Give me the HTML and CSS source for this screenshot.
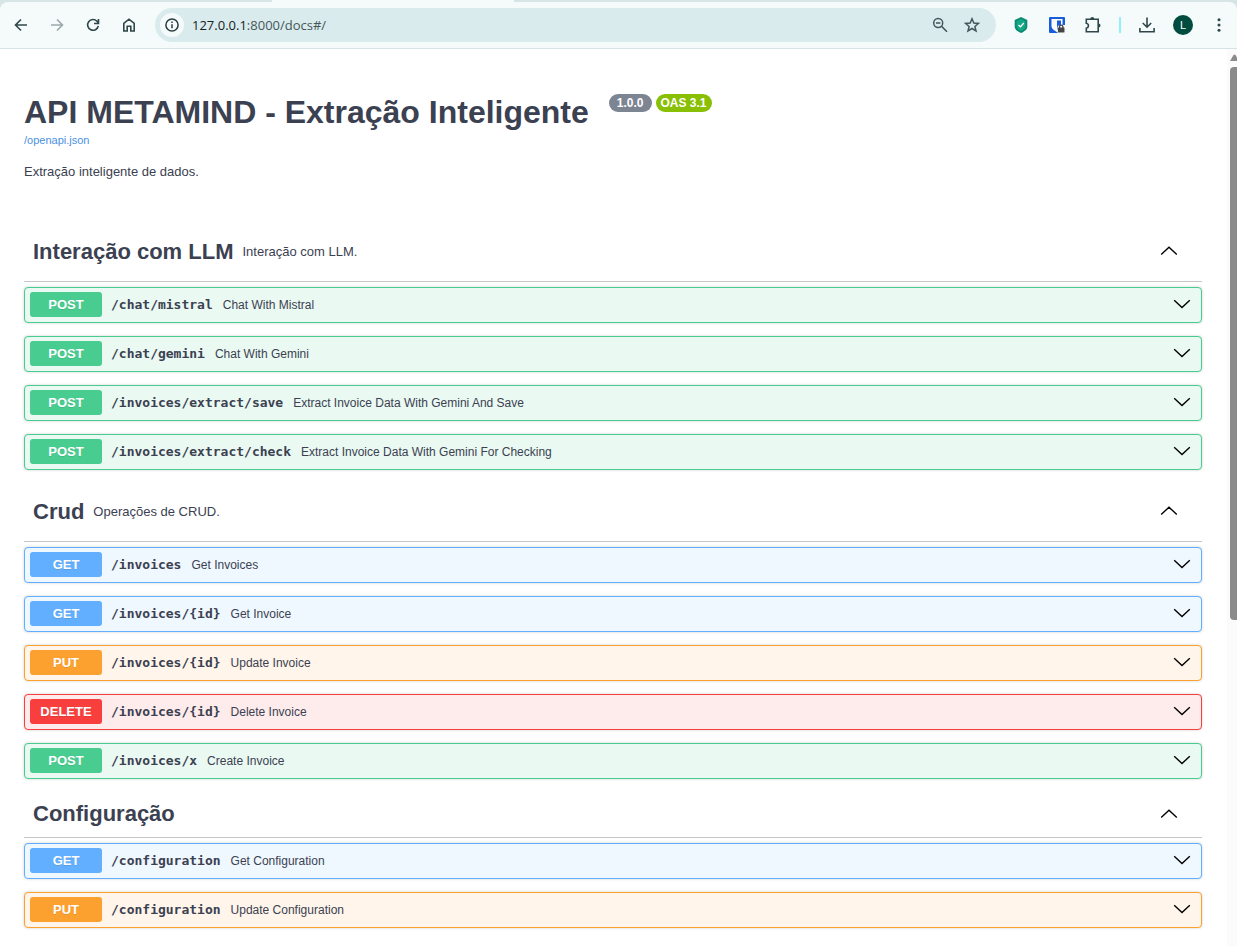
FILE: index.html
```html
<!DOCTYPE html>
<html lang="pt-BR">
<head>
<meta charset="utf-8">
<title>API METAMIND - Extração Inteligente</title>
<link rel="stylesheet" href="styles.css">
</head>
<body>
<svg class="defs" aria-hidden="true">
  <symbol id="down" viewBox="0 0 18 12"><path d="M1.200 1.200L9 8.500l7.800-7.300" fill="none" stroke="#000" stroke-width="1.400"/></symbol>
  <symbol id="up" viewBox="0 0 18 12"><path d="M1.200 9.500L9 2.200L16.800 9.500" fill="none" stroke="#000" stroke-width="1.400"/></symbol>
</svg>
<header class="browser">
  <div class="tabstrip"><span class="tab-active"></span></div>
  <div class="toolbar">
    <nav class="nav">
      <button class="tool" aria-label="Back"><svg width="16" height="16" viewBox="0 0 16 16"><path d="M14 8H3M8 2.500L2.500 8L8 13.500" class="line"/></svg></button>
      <button class="tool faded" aria-label="Forward"><svg width="16" height="16" viewBox="0 0 16 16"><path d="M2 8h11M8 2.500L13.500 8L8 13.500" class="line"/></svg></button>
      <button class="tool" aria-label="Reload"><svg width="16" height="16" viewBox="0 0 16 16"><path d="M13.300 9A5.400 5.400 0 1 1 12 4.200L13.500 6M13.500 2v4.500H9" class="line"/></svg></button>
      <button class="tool" aria-label="Home"><svg width="16" height="16" viewBox="0 0 16 16"><path d="M2.800 6.300L8 2.200L13.200 6.300V14H9.800V9.200H6.200V14H2.800Z" class="line"/></svg></button>
    </nav>
    <div class="omnibox">
      <button class="info" aria-label="Site information"><svg width="14" height="14" viewBox="0 0 14 14"><circle cx="7" cy="7" r="6.100" fill="none" stroke="#2a3d3e" stroke-width="1.500"/><path d="M7 6.300V10.200M7 3.600V5" stroke="#2a3d3e" stroke-width="1.500"/></svg></button>
      <span class="url"><b>127.0.0.1</b>:8000/docs#/</span>
      <button class="chip" aria-label="Zoom"><svg width="16" height="16" viewBox="0 0 16 16"><circle cx="6.200" cy="6" r="4.500" class="line thin"/><path d="M9.600 9.400L15 14.800M4 6h4.400" class="line thin"/></svg></button>
      <button class="chip" aria-label="Bookmark"><svg width="16" height="16" viewBox="0 0 16 16"><path d="M8 1.800L9.800 6L14.400 6.400L10.900 9.400L12 14L8 11.500L4 14L5.100 9.400L1.600 6.400L6.200 6Z" class="line thin"/></svg></button>
    </div>
    <div class="actions">
      <button class="tool" aria-label="Shield"><svg width="14" height="16" viewBox="0 0 14 16"><path d="M7 0L13.300 3V9.500C13.300 12.500 10.500 14.500 7 16C3.500 14.500 .7 12.500 .7 9.500V3Z" fill="#0b8870"/><path d="M7 2L11.500 4.200V9.300C11.500 11.500 9.500 13 7 14.200C4.500 13 2.500 11.500 2.500 9.300V4.200Z" fill="#12a886"/><path d="M4.500 8L6.500 9.800L9.800 6" fill="none" stroke="#fff" stroke-width="1.300"/></svg></button>
      <button class="tool" aria-label="Password manager"><svg width="16" height="16" viewBox="0 0 16 16"><rect width="16" height="16" rx="1" fill="#175ddc"/><path d="M2.500 2H13.500V9C13.500 12 10.500 13.500 8 15C5.500 13.500 2.500 12 2.500 9Z" fill="#fff"/><path d="M8 3.500H12V8.500C12 10.500 9.800 12 8 13Z" fill="#175ddc"/><path d="M8.500 10L10 8H16V16H8.500Z" fill="#fff"/><path d="M10.500 11V9.800a1.700 1.700 0 0 1 3.400 0V11" fill="none" stroke="#444" stroke-width="1.400"/><rect x="9" y="10.500" width="6.500" height="5" rx=".6" fill="#444"/></svg></button>
      <button class="tool" aria-label="Extensions"><svg width="18" height="18" viewBox="0 0 18 18"><path d="M2.300 3.200H14.200V15.800H2.300V12.300C5.200 11.600 5.200 8 2.300 7.300Z" class="line"/><path d="M6.300 3a2 2 0 0 1 4 0ZM14.500 7.500a2 2 0 0 1 0 4Z" fill="#2f474a"/></svg></button>
      <span class="divider"></span>
      <button class="tool" aria-label="Downloads"><svg width="18" height="18" viewBox="0 0 18 18"><path d="M9 1.500V11M4.800 7L9 11.200L13.200 7M1.900 12V15.800H16.100V12" class="line"/></svg></button>
      <button class="tool" aria-label="Profile"><span class="avatar">L</span></button>
      <button class="tool" aria-label="Menu"><svg width="4" height="16" viewBox="0 0 4 16" fill="#2f474a"><circle cx="2" cy="2.800" r="1.500"/><circle cx="2" cy="8" r="1.500"/><circle cx="2" cy="13.200" r="1.500"/></svg></button>
    </div>
  </div>
</header>
<div class="viewport">
  <main class="docs">
    <div class="heading">
      <h1>API METAMIND - Extração Inteligente</h1>
      <span class="badge version">1.0.0</span>
      <span class="badge oas">OAS 3.1</span>
    </div>
    <a class="spec" href="#">/openapi.json</a>
    <p class="about">Extração inteligente de dados.</p>

    <section class="group">
      <div class="tag"><h2>Interação com LLM</h2><p>Interação com LLM.</p><button class="toggle" aria-label="Collapse"><svg width="18" height="12"><use href="#up"/></svg></button></div>
      <div class="ops">
        <div class="op post"><button class="summary"><span class="method">POST</span><span class="path">/chat/mistral</span><span>Chat With Mistral</span></button><button class="toggle" aria-label="Expand"><svg width="18" height="12"><use href="#down"/></svg></button></div>
        <div class="op post"><button class="summary"><span class="method">POST</span><span class="path">/chat/gemini</span><span>Chat With Gemini</span></button><button class="toggle" aria-label="Expand"><svg width="18" height="12"><use href="#down"/></svg></button></div>
        <div class="op post"><button class="summary"><span class="method">POST</span><span class="path">/invoices/extract/save</span><span>Extract Invoice Data With Gemini And Save</span></button><button class="toggle" aria-label="Expand"><svg width="18" height="12"><use href="#down"/></svg></button></div>
        <div class="op post"><button class="summary"><span class="method">POST</span><span class="path">/invoices/extract/check</span><span>Extract Invoice Data With Gemini For Checking</span></button><button class="toggle" aria-label="Expand"><svg width="18" height="12"><use href="#down"/></svg></button></div>
      </div>
    </section>

    <section class="group">
      <div class="tag"><h2>Crud</h2><p>Operações de CRUD.</p><button class="toggle" aria-label="Collapse"><svg width="18" height="12"><use href="#up"/></svg></button></div>
      <div class="ops">
        <div class="op get"><button class="summary"><span class="method">GET</span><span class="path">/invoices</span><span>Get Invoices</span></button><button class="toggle" aria-label="Expand"><svg width="18" height="12"><use href="#down"/></svg></button></div>
        <div class="op get"><button class="summary"><span class="method">GET</span><span class="path">/invoices/{id}</span><span>Get Invoice</span></button><button class="toggle" aria-label="Expand"><svg width="18" height="12"><use href="#down"/></svg></button></div>
        <div class="op put"><button class="summary"><span class="method">PUT</span><span class="path">/invoices/{id}</span><span>Update Invoice</span></button><button class="toggle" aria-label="Expand"><svg width="18" height="12"><use href="#down"/></svg></button></div>
        <div class="op delete"><button class="summary"><span class="method">DELETE</span><span class="path">/invoices/{id}</span><span>Delete Invoice</span></button><button class="toggle" aria-label="Expand"><svg width="18" height="12"><use href="#down"/></svg></button></div>
        <div class="op post"><button class="summary"><span class="method">POST</span><span class="path">/invoices/x</span><span>Create Invoice</span></button><button class="toggle" aria-label="Expand"><svg width="18" height="12"><use href="#down"/></svg></button></div>
      </div>
    </section>

    <section class="group">
      <div class="tag"><h2>Configuração</h2><button class="toggle" aria-label="Collapse"><svg width="18" height="12"><use href="#up"/></svg></button></div>
      <div class="ops">
        <div class="op get"><button class="summary"><span class="method">GET</span><span class="path">/configuration</span><span>Get Configuration</span></button><button class="toggle" aria-label="Expand"><svg width="18" height="12"><use href="#down"/></svg></button></div>
        <div class="op put"><button class="summary"><span class="method">PUT</span><span class="path">/configuration</span><span>Update Configuration</span></button><button class="toggle" aria-label="Expand"><svg width="18" height="12"><use href="#down"/></svg></button></div>
      </div>
    </section>
  </main>
  <div class="scrollbar" aria-hidden="true">
    <svg width="8" height="7" viewBox="0 0 8 7"><path d="M0 7L3.500 1Q4.500 0 5.500 1L8 5V7Z" fill="#8b8b8b"/></svg>
    <span class="thumb"></span>
  </div>
</div>
</body>
</html>
```
FILE: styles.css
```css
* { box-sizing: border-box; }

body {
  margin: 0;
  min-height: 100vh;
  display: flex;
  flex-direction: column;
  background: #fff;
  color: #3b4151;
  font-family: "Liberation Sans", Arial, sans-serif;
}

h1, h2, p { margin: 0; }

button {
  padding: 0;
  border: 0;
  background: none;
  color: inherit;
  font: inherit;
  cursor: pointer;
}

.defs { display: none; }

/* Browser bar */
.browser { background: #d7e5e7; }

.tabstrip { height: 2px; padding-left: 272px; }

.tab-active {
  display: block;
  width: 242px;
  height: 2px;
  background: #f5fbfb;
}

.toolbar {
  display: flex;
  align-items: center;
  height: 47px;
  padding-left: 3px;
  border-bottom: 1px solid #d5e3e6;
  border-radius: 8px 8px 0 0;
  background: #f5fbfb;
}

.nav, .actions { display: flex; align-items: center; }

.tool {
  display: flex;
  align-items: center;
  justify-content: center;
  width: 36px;
  height: 34px;
}

.line { fill: none; stroke: #2f474a; stroke-width: 1.6; }
.thin { stroke: #44565a; stroke-width: 1.5; }
.faded { opacity: .45; }

.omnibox {
  flex: 1;
  display: flex;
  align-items: center;
  height: 34px;
  margin: 0 7px 0 8px;
  padding: 0 8px 0 5px;
  border-radius: 17px;
  background: #d9ebec;
}

.info {
  display: flex;
  align-items: center;
  justify-content: center;
  width: 24px;
  height: 24px;
  border-radius: 50%;
  background: #f5fbfb;
}

.url {
  flex: 1;
  padding-left: 8px;
  color: #46575a;
  font: 13px/18px "Open Sans", "Noto Sans", sans-serif;
}

.url b { color: #16211f; font-weight: 400; }

.chip {
  display: flex;
  align-items: center;
  justify-content: center;
  width: 32px;
  height: 32px;
}

.divider {
  width: 2px;
  height: 16px;
  margin: 0 8px;
  background: #92effc;
}

.avatar {
  width: 20px;
  height: 20px;
  border-radius: 50%;
  background: #004d40;
  color: #fff;
  font-size: 11px;
  line-height: 20px;
}

/* Page */
.viewport { flex: 1; display: flex; }

.docs { flex: 1; padding: 45px 25px 18px 24px; }

.heading { display: flex; align-items: flex-start; gap: 4px; }

h1 { margin-right: 16px; font-size: 32px; line-height: 37px; }

.badge {
  border-radius: 9px;
  color: #fff;
  font-size: 12px;
  font-weight: 700;
  line-height: 18px;
}

.version { padding: 0 8px; background: #7d8492; }
.oas { padding: 0 5px; background: #89bf04; }

.spec {
  display: block;
  width: fit-content;
  margin-top: 3px;
  color: #4990e2;
  font-size: 11px;
  line-height: 13px;
  text-decoration: none;
}

.about { margin: 16px 0 40px; font-size: 13px; line-height: 18px; }

.group + .group { margin-top: 11px; }

.tag {
  display: flex;
  align-items: center;
  gap: 9px;
  margin-bottom: 5px;
  padding: 10px 24px 10px 9px;
  border-bottom: 1px solid #c4c6ca;
}

h2 { font-size: 22px; line-height: 27px; }

.tag p { padding: 12px 0 10px; font-size: 13px; line-height: 18px; }

.toggle { display: flex; margin-left: auto; }

.ops { display: grid; gap: 13px; }

.op {
  display: flex;
  align-items: center;
  padding: 4px 10px 4px 5px;
  border: 1px solid var(--accent);
  border-radius: 4px;
  background: var(--tint);
  box-shadow: 0 0 3px rgba(0, 0, 0, .19);
}

.post { --accent: #49cc90; --tint: #eaf9f2; }
.get { --accent: #61affe; --tint: #eff7ff; }
.put { --accent: #fca130; --tint: #fff5ea; }
.delete { --accent: #f93e3e; --tint: #feebeb; }

.summary {
  flex: 1;
  display: flex;
  align-items: baseline;
  gap: 9px;
  font-size: 12px;
  line-height: 25px;
  text-align: left;
}

.method {
  width: 72px;
  border-radius: 3px;
  background: var(--accent);
  color: #fff;
  font-size: 13px;
  font-weight: 700;
  text-align: center;
  text-shadow: 0 1px 0 rgba(0, 0, 0, .1);
}

.path {
  margin-right: 1px;
  font-family: "DejaVu Sans Mono", monospace;
  font-size: 13px;
  font-weight: 700;
}

/* Scrollbar */
.scrollbar {
  display: flex;
  flex-direction: column;
  gap: 6px;
  width: 10px;
  padding: 5px 0 0 3px;
  background: #fbfbfb;
}

.thumb {
  height: 62%;
  border-radius: 4px 0 0 4px;
  background: #8b8b8b;
}
```
